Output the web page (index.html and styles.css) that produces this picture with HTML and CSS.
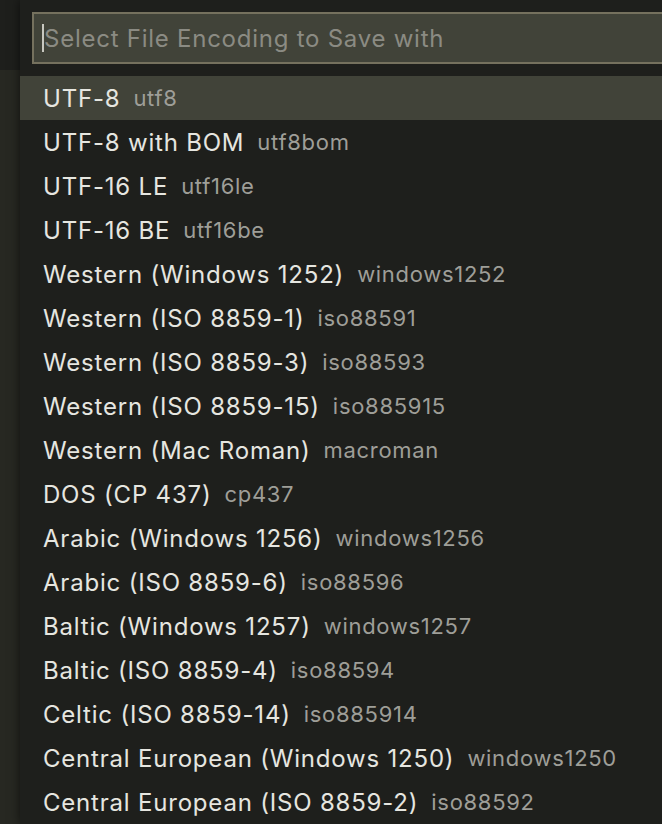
FILE: index.html
```html
<!DOCTYPE html>
<html>
<head>
<meta charset="utf-8">
<link rel="stylesheet" href="styles.css">
</head>
<body>
<div class="editor">
  <div class="tabbar"></div>
  <div class="body"></div>
</div>
<div class="quickopen">
  <div class="inputwrap">
    <div class="input"><span class="caret"></span><span class="placeholder">Select File Encoding to Save with</span></div>
  </div>
  <ul class="list">
    <li class="item selected"><span class="label">UTF-8</span><span class="desc">utf8</span></li>
    <li class="item"><span class="label">UTF-8 with BOM</span><span class="desc">utf8bom</span></li>
    <li class="item"><span class="label">UTF-16 LE</span><span class="desc">utf16le</span></li>
    <li class="item"><span class="label">UTF-16 BE</span><span class="desc">utf16be</span></li>
    <li class="item"><span class="label">Western (Windows 1252)</span><span class="desc">windows1252</span></li>
    <li class="item"><span class="label">Western (ISO 8859-1)</span><span class="desc">iso88591</span></li>
    <li class="item"><span class="label">Western (ISO 8859-3)</span><span class="desc">iso88593</span></li>
    <li class="item"><span class="label">Western (ISO 8859-15)</span><span class="desc">iso885915</span></li>
    <li class="item"><span class="label">Western (Mac Roman)</span><span class="desc">macroman</span></li>
    <li class="item"><span class="label">DOS (CP 437)</span><span class="desc">cp437</span></li>
    <li class="item"><span class="label">Arabic (Windows 1256)</span><span class="desc">windows1256</span></li>
    <li class="item"><span class="label">Arabic (ISO 8859-6)</span><span class="desc">iso88596</span></li>
    <li class="item"><span class="label">Baltic (Windows 1257)</span><span class="desc">windows1257</span></li>
    <li class="item"><span class="label">Baltic (ISO 8859-4)</span><span class="desc">iso88594</span></li>
    <li class="item"><span class="label">Celtic (ISO 8859-14)</span><span class="desc">iso885914</span></li>
    <li class="item"><span class="label">Central European (Windows 1250)</span><span class="desc">windows1250</span></li>
    <li class="item"><span class="label">Central European (ISO 8859-2)</span><span class="desc">iso88592</span></li>
  </ul>
</div>
</body>
</html>
```
FILE: styles.css
```css
html, body {
  margin: 0;
  padding: 0;
  width: 662px;
  height: 824px;
  overflow: hidden;
  background: #272822;
  font-family: "Inter", "Noto Sans", sans-serif;
}
.editor {
  position: absolute;
  left: 0;
  top: 0;
  width: 662px;
  height: 824px;
  display: flex;
  flex-direction: column;
}
.tabbar {
  height: 70px;
  background: #1e1f1c;
}
.body {
  flex: 1;
  background: #272822;
}
.quickopen {
  position: absolute;
  left: 20px;
  top: 0;
  right: 0;
  height: 824px;
  overflow: hidden;
  background: #1e1f1c;
  box-shadow: 0 0 10px rgba(0,0,0,0.6);
}
.inputwrap {
  padding: 12px 0 12px 12px;
}
.input {
  height: 48px;
  margin-right: -10px;
  border: 2px solid #75715e;
  background: #414339;
  display: flex;
  align-items: center;
  padding-left: 8px;
}
.caret {
  width: 2px;
  height: 28px;
  background: #c8c8c0;
}
.placeholder {
  color: #8b8b83;
  font-size: 24px;
  letter-spacing: 0.75px;
  white-space: nowrap;
}
.list {
  list-style: none;
  margin: 0;
  padding: 0;
}
.item {
  height: 44px;
  display: flex;
  align-items: center;
  padding-left: 23px;
  white-space: nowrap;
}
.item.selected {
  background: #414339;
}
.label {
  color: #e6e6e0;
  font-size: 24px;
  letter-spacing: 0.8px;
}
.desc {
  color: #9e9e98;
  font-size: 22px;
  letter-spacing: 0.7px;
  margin-left: 13px;
}
```
